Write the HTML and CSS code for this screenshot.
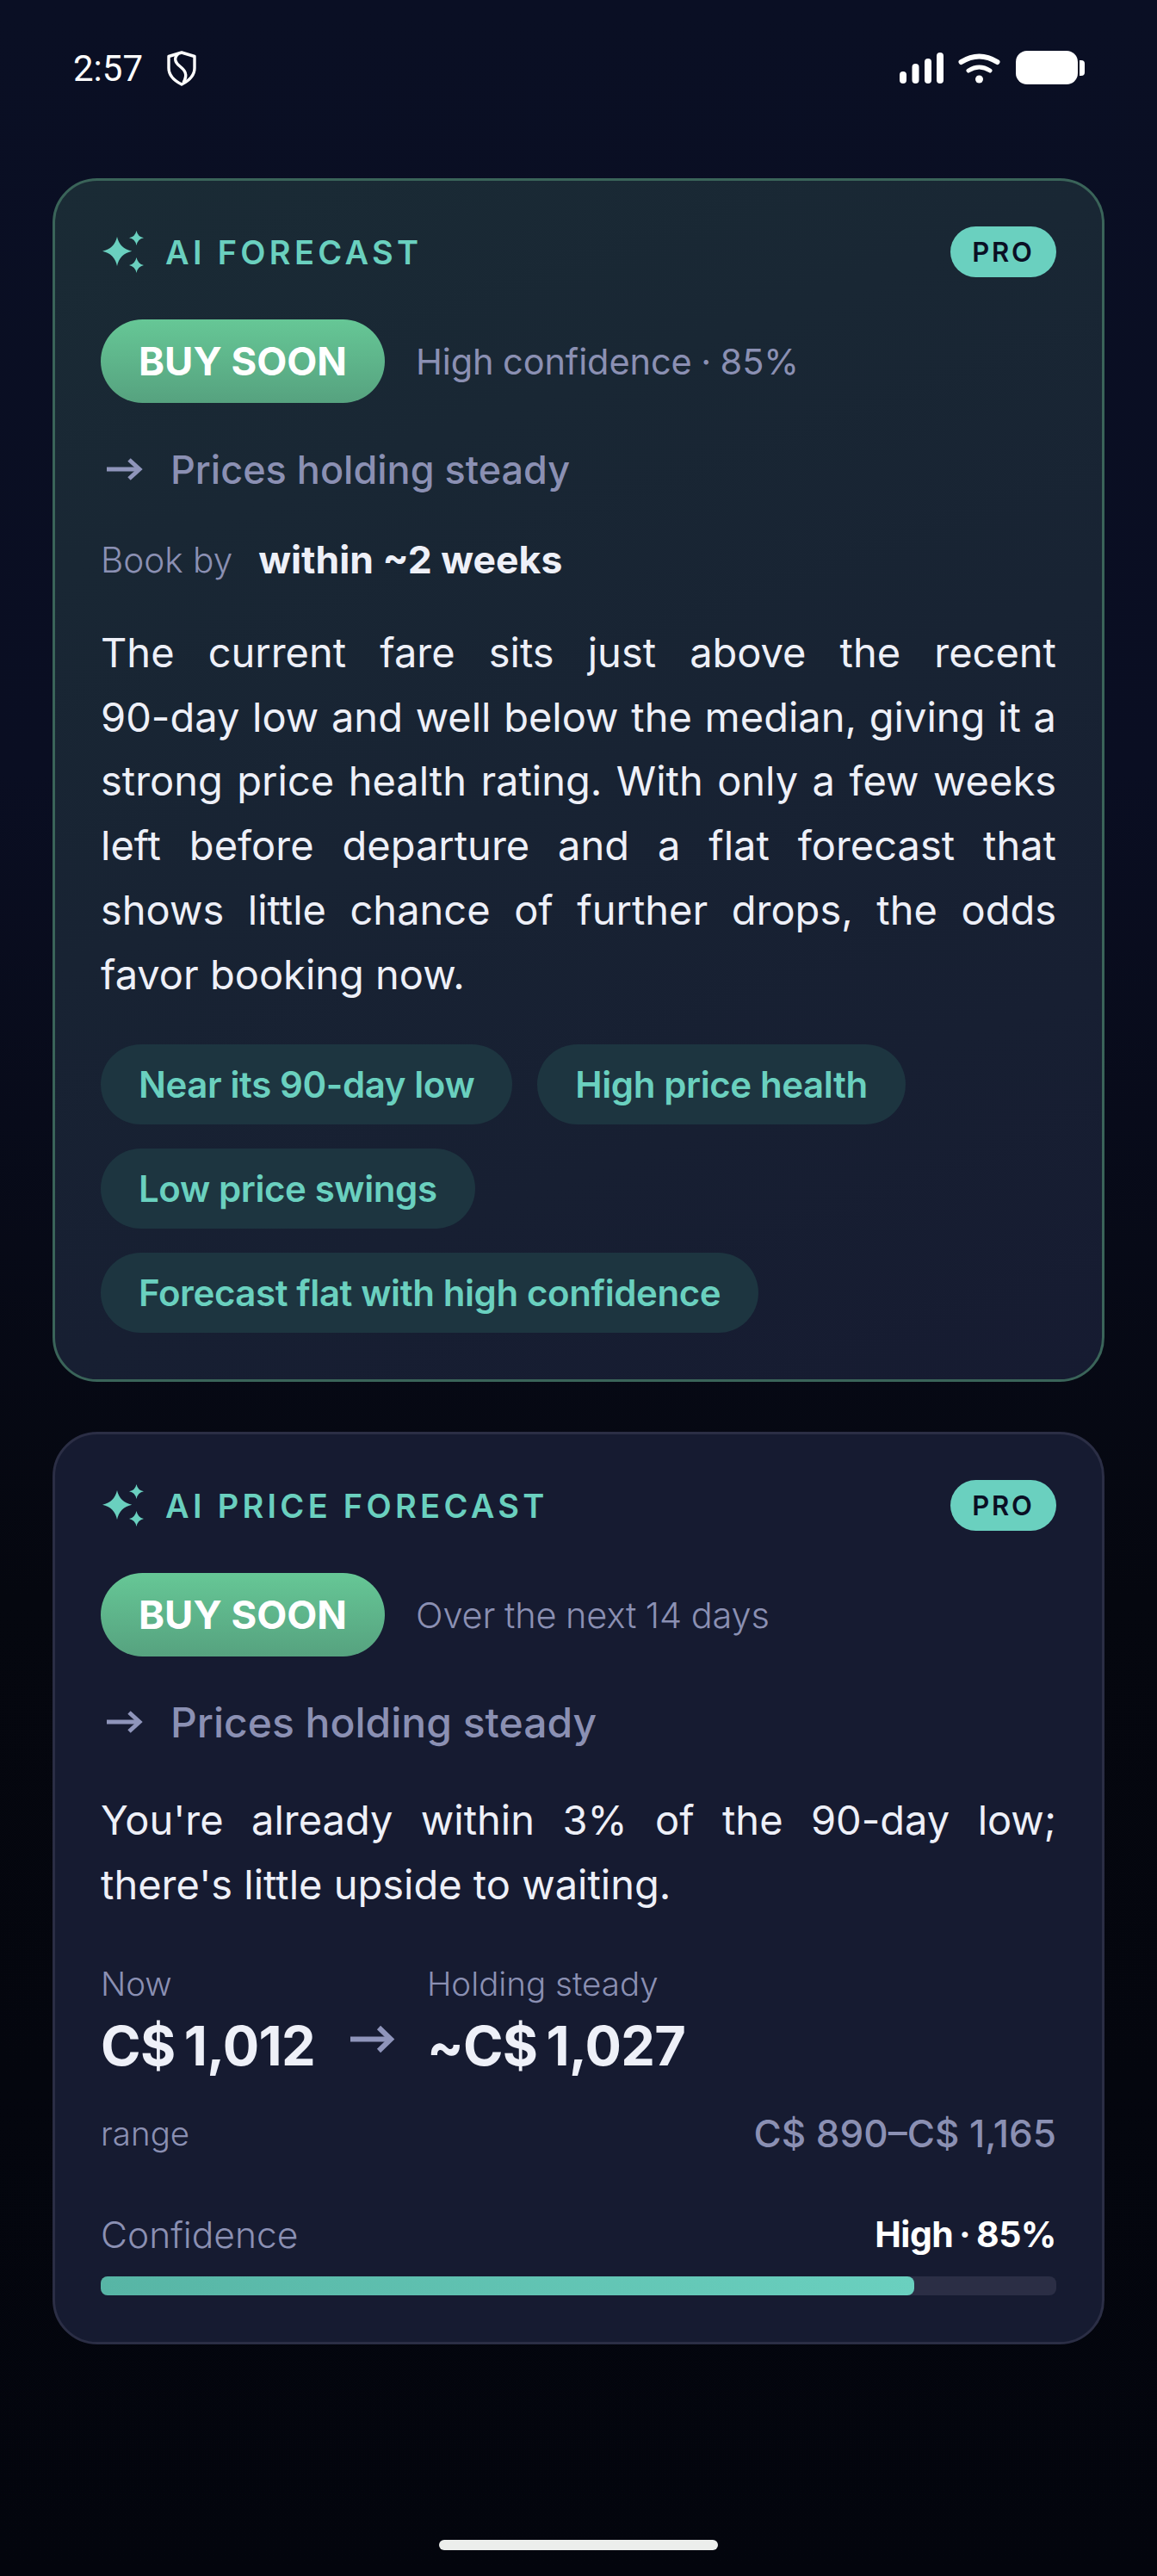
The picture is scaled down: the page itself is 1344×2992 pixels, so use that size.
FILE: index.html
```html
<!DOCTYPE html>
<html lang="en">
<head>
  <meta charset="UTF-8" />
  <title>AI Forecast</title>
  <link rel="stylesheet" href="styles.css">
</head>
<body>
  <div class="statusbar">
    <div class="status-left">
      <span class="clock">2:57</span>
      <svg class="shield" viewBox="0 0 34 41" fill="none" stroke="#fff" stroke-width="3.4" stroke-linejoin="round"><path d="M17 2 L32 6.500 V20 C32 29 25 35 17 39 C9 35 2 29 2 20 V6.500 Z"/><path d="M13 3.500 C7 9 10 14 15 18 C20 22 25 27 19 37"/></svg>
    </div>
    <div class="status-right">
      <svg class="signal" viewBox="0 0 51 36" fill="#fff"><rect x="0" y="22" width="8" height="14" rx="4"/><rect x="14.500" y="13" width="8" height="23" rx="4"/><rect x="29" y="7" width="8" height="29" rx="4"/><rect x="43" y="0" width="8" height="36" rx="4"/></svg>
      <svg class="wifi" viewBox="0 0 49 36" fill="none" stroke="#fff" stroke-linecap="round"><path stroke-width="6" d="M3.500 11 Q24.500 -2 45.500 11"/><path stroke-width="5" d="M12 21 Q24.500 13 37 21"/><circle cx="24.500" cy="31" r="4.500" fill="#fff" stroke="none"/></svg>
      <div class="battery"></div>
      <div class="battery-nub"></div>
    </div>
  </div>

  <main class="cards">
    <section class="card card-teal">
      <div class="card-head">
        <div class="card-title">
          <svg class="sparkle" viewBox="0 0 48 49" fill="#6ad0bf"><path d="M17 7 Q20 20.700 34.300 23.700 Q20 26.700 17 41 Q14 26.700 0 23.700 Q14 20.700 17 7 Z"/><path d="M39.500 0 Q41 7 48 8.300 Q41 9.600 39.500 17 Q38 9.600 31 8.300 Q38 7 39.500 0 Z"/><path d="M39.500 31 Q41 38.500 48 40 Q41 41.500 39.500 49 Q38 41.500 31 40 Q38 38.500 39.500 31 Z"/></svg>
          <span>AI FORECAST</span>
        </div>
        <span class="pro">PRO</span>
      </div>

      <div class="verdict">
        <span class="buy">BUY SOON</span>
        <span class="verdict-note">High confidence · 85%</span>
      </div>

      <div class="trend">
        <svg class="arrow" viewBox="0 0 42 28" fill="none" stroke="#8f95bb" stroke-width="5"><path d="M0 14 H38"/><path d="M26 3 L38 14 L26 25"/></svg>
        <span>Prices holding steady</span>
      </div>

      <div class="book">
        <span class="book-label">Book by</span>
        <span class="book-value">within ~2 weeks</span>
      </div>

      <p class="summary">
        <span class="line">The current fare sits just above the recent</span>
        <span class="line">90-day low and well below the median, giving it a</span>
        <span class="line">strong price health rating. With only a few weeks</span>
        <span class="line">left before departure and a flat forecast that</span>
        <span class="line">shows little chance of further drops, the odds</span>
        <span class="line line-end">favor booking now.</span>
      </p>

      <div class="chips">
        <span class="chip">Near its 90-day low</span>
        <span class="chip">High price health</span>
        <span class="chip">Low price swings</span>
        <span class="chip">Forecast flat with high confidence</span>
      </div>
    </section>

    <section class="card card-plain">
      <div class="card-head">
        <div class="card-title">
          <svg class="sparkle" viewBox="0 0 48 49" fill="#6ad0bf"><path d="M17 7 Q20 20.700 34.300 23.700 Q20 26.700 17 41 Q14 26.700 0 23.700 Q14 20.700 17 7 Z"/><path d="M39.500 0 Q41 7 48 8.300 Q41 9.600 39.500 17 Q38 9.600 31 8.300 Q38 7 39.500 0 Z"/><path d="M39.500 31 Q41 38.500 48 40 Q41 41.500 39.500 49 Q38 41.500 31 40 Q38 38.500 39.500 31 Z"/></svg>
          <span>AI PRICE FORECAST</span>
        </div>
        <span class="pro">PRO</span>
      </div>

      <div class="verdict">
        <span class="buy">BUY SOON</span>
        <span class="verdict-note light">Over the next 14 days</span>
      </div>

      <div class="trend trend-big">
        <svg class="arrow" viewBox="0 0 42 28" fill="none" stroke="#8f95bb" stroke-width="5"><path d="M0 14 H38"/><path d="M26 3 L38 14 L26 25"/></svg>
        <span>Prices holding steady</span>
      </div>

      <p class="summary summary-short">You're already within 3% of the 90-day low; there's little upside to waiting.</p>

      <div class="prices">
        <div class="price-col">
          <span class="price-label">Now</span>
          <span class="price-value">C$ 1,012</span>
        </div>
        <svg class="price-arrow" viewBox="0 0 52 33" fill="none" stroke="#8f95bb" stroke-width="6"><path d="M0 16.500 H47"/><path d="M33 3 L47 16.500 L33 30"/></svg>
        <div class="price-col">
          <span class="price-label">Holding steady</span>
          <span class="price-value">~C$ 1,027</span>
        </div>
      </div>

      <div class="range">
        <span class="range-label">range</span>
        <span class="range-value">C$ 890–C$ 1,165</span>
      </div>

      <div class="conf">
        <span class="conf-label">Confidence</span>
        <span class="conf-value">High · 85%</span>
      </div>
      <div class="bar"><div class="bar-fill" style="width: 85.1%"></div></div>
    </section>
  </main>

  <div class="home-bar"></div>
</body>
</html>
```

FILE: styles.css
```css
* {
  box-sizing: border-box;
}

html, body {
  margin: 0;
  height: 100%;
}

body {
  width: 1344px;
  height: 2992px;
  overflow: hidden;
  font-family: Inter, "Noto Sans", sans-serif;
  color: #eef0f8;
  background: linear-gradient(180deg, #0a0f24 0%, #0a0e22 30%, #05070f 62%, #03050d 100%);
}

.statusbar {
  height: 207px;
  padding: 59px 84px 0 85px;
  display: flex;
  justify-content: space-between;
  align-items: flex-start;
}

.status-left {
  display: flex;
  align-items: center;
  gap: 28px;
  height: 41px;
}

.clock {
  font-family: Roboto, sans-serif;
  font-size: 42px;
  color: #fff;
}

.shield {
  width: 34px;
  height: 41px;
}

.status-right {
  display: flex;
  align-items: center;
  height: 39px;
}

.signal {
  width: 51px;
  height: 36px;
}

.wifi {
  width: 49px;
  height: 36px;
  margin: 0 18px 0 17px;
}

.battery {
  width: 72px;
  height: 39px;
  border-radius: 13px;
  background: #fff;
}

.battery-nub {
  width: 6px;
  height: 18px;
  margin-left: 2px;
  border-radius: 0 4px 4px 0;
  background: #fff;
}

.cards {
  padding: 0 61px;
  display: flex;
  flex-direction: column;
  gap: 58px;
}

.card {
  border-radius: 52px;
  padding: 53px 53px;
}

.card-teal {
  height: 1398px;
  border: 3px solid #3a6459;
  background: linear-gradient(160deg, #1a2b35 0%, #161b31 100%);
}

.card-plain {
  height: 1060px;
  border: 3px solid #2b2e45;
  background: #161b31;
}

.card-head {
  display: flex;
  justify-content: space-between;
  align-items: center;
  height: 59px;
}

.card-title {
  display: flex;
  align-items: center;
  gap: 25px;
  padding-left: 2px;
  font-size: 38px;
  font-weight: 600;
  letter-spacing: 4.3px;
  color: #6ad0bf;
}

.sparkle {
  width: 48px;
  height: 49px;
}

.pro {
  width: 123px;
  height: 59px;
  display: flex;
  align-items: center;
  justify-content: center;
  border-radius: 30px;
  background: #6ad0bf;
  color: #0a0f24;
  font-size: 31px;
  font-weight: 600;
  letter-spacing: 2.8px;
}

.verdict {
  display: flex;
  align-items: center;
  margin-top: 49px;
}

.buy {
  width: 330px;
  height: 97px;
  display: flex;
  align-items: center;
  justify-content: center;
  border-radius: 49px;
  background: linear-gradient(180deg, #66c796 0%, #56a27f 100%);
  color: #fff;
  font-size: 45.500px;
  font-weight: 700;
}

.verdict-note {
  margin-left: 36px;
  font-size: 41.500px;
  letter-spacing: -0.1px;
  word-spacing: -1px;
  color: #8b90b3;
}

.verdict-note.light {
  font-weight: 300;
}

.trend {
  display: flex;
  align-items: center;
  height: 60px;
  margin-top: 47px;
  font-size: 45px;
  font-weight: 500;
  color: #8b90b3;
}

.trend-big {
  margin-top: 46px;
  font-size: 48px;
}

.arrow {
  width: 42px;
  height: 28px;
  margin: 0 32px 0 7px;
}

.book {
  display: flex;
  align-items: center;
  height: 60px;
  margin-top: 45px;
}

.book-label {
  font-size: 40.500px;
  font-weight: 300;
  color: #8b90b3;
}

.book-value {
  margin-left: 30px;
  font-size: 44.500px;
  font-weight: 700;
}

.summary {
  margin: 41px 0 0;
  font-size: 47px;
  font-weight: 400;
  line-height: 74.7px;
  text-align: justify;
}

.summary-short {
  margin-top: 47px;
}

.line {
  display: block;
  white-space: nowrap;
  text-align-last: justify;
}

.line-end {
  text-align-last: left;
}

.chips {
  display: flex;
  flex-wrap: wrap;
  gap: 28px 29px;
  margin-top: 44px;
}

.chip {
  height: 93px;
  padding: 0 44px;
  display: flex;
  align-items: center;
  border-radius: 47px;
  background: #1d3540;
  color: #6ad0bf;
  font-size: 42px;
  font-weight: 600;
  letter-spacing: -0.4px;
}

.prices {
  display: flex;
  align-items: center;
  margin-top: 55px;
}

.price-col {
  display: flex;
  flex-direction: column;
}

.price-label {
  height: 46px;
  line-height: 46px;
  font-size: 38.500px;
  font-weight: 300;
  color: #8b90b3;
}

.price-value {
  margin-top: 11px;
  height: 76px;
  line-height: 76px;
  font-size: 63px;
  font-weight: 700;
  letter-spacing: -0.7px;
  word-spacing: -4px;
}

.price-arrow {
  width: 52px;
  height: 33px;
  margin: 42px 37px 0 41px;
}

.range {
  display: flex;
  justify-content: space-between;
  align-items: center;
  height: 60px;
  margin-top: 34px;
}

.range-label {
  font-size: 38.500px;
  font-weight: 300;
  color: #8b90b3;
}

.range-value {
  font-size: 44px;
  font-weight: 500;
  color: #8b90b3;
}

.conf {
  display: flex;
  justify-content: space-between;
  align-items: center;
  height: 60px;
  margin-top: 57px;
}

.conf-label {
  font-size: 42.500px;
  font-weight: 300;
  color: #8b90b3;
}

.conf-value {
  font-size: 41px;
  font-weight: 700;
  letter-spacing: -0.5px;
  word-spacing: -2.500px;
  color: #fff;
}

.bar {
  height: 22px;
  margin-top: 19px;
  border-radius: 8px;
  background: #2b2e45;
}

.bar-fill {
  height: 100%;
  border-radius: 8px;
  background: linear-gradient(90deg, #57b5a5 0%, #6ad0bf 100%);
}

.home-bar {
  position: absolute;
  left: 510px;
  top: 2950px;
  width: 324px;
  height: 12px;
  border-radius: 6px;
  background: #eceeec;
}
```
